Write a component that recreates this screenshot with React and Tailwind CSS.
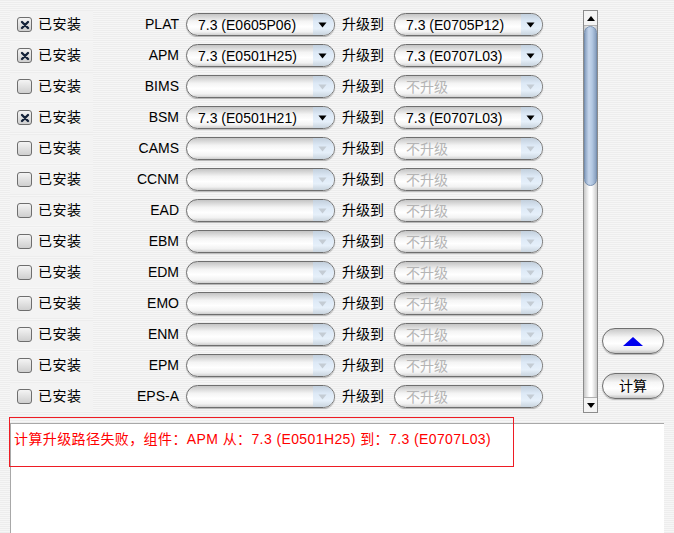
import React from "react";

const rows = [
  { name: "PLAT", on: true, from: "7.3 (E0605P06)", to: "7.3 (E0705P12)" },
  { name: "APM", on: true, from: "7.3 (E0501H25)", to: "7.3 (E0707L03)" },
  { name: "BIMS", on: false },
  { name: "BSM", on: true, from: "7.3 (E0501H21)", to: "7.3 (E0707L03)" },
  { name: "CAMS", on: false },
  { name: "CCNM", on: false },
  { name: "EAD", on: false },
  { name: "EBM", on: false },
  { name: "EDM", on: false },
  { name: "EMO", on: false },
  { name: "ENM", on: false },
  { name: "EPM", on: false },
  { name: "EPS-A", on: false },
];

const Check = ({ on }) => (
  <div className="w-[15px] h-[15px] rounded-[3px] border border-[#6e6e6e] bg-[linear-gradient(to_bottom,#f4f4f4,#cfcfcf)] flex items-center justify-center">
    {on && (
      <svg width="10" height="10" viewBox="0 0 10 10">
        <path d="M2 2 L8 8 M8 2 L2 8" stroke="#15233a" strokeWidth="2.4" strokeLinecap="round" />
      </svg>
    )}
  </div>
);

const Arrow = ({ color }) => (
  <svg width="9" height="6" viewBox="0 0 9 6">
    <path d="M0.5 0.5 H8.5 L4.5 5.5 Z" fill={color} />
  </svg>
);

const Combo = ({ value, disabled, placeholder }) => (
  <div className="w-[149px] h-[23px] rounded-full border border-[#6e6e6e] bg-[linear-gradient(to_bottom,#c4c4c4_0%,#f4f4f4_35%,#ffffff_60%,#f2f2f2_85%,#cfcfcf_100%)] flex items-center overflow-hidden shadow-[0_1px_1px_rgba(0,0,0,0.25)]">
    <div className={`flex-1 pl-[11px] text-[14px] leading-none ${disabled ? "text-[#b4b4b4]" : "text-black"}`}>
      {value || placeholder || ""}
    </div>
    <div className="w-[21px] h-full bg-[linear-gradient(to_bottom,#c2cfdc_0%,#dde9f6_35%,#e6f0fa_70%,#c9d4de_100%)] flex items-center justify-center pr-[3px]">
      <Arrow color={value ? "#000" : "#c4ccd4"} />
    </div>
  </div>
);

const PillButton = ({ children }) => (
  <div className="w-[62px] h-[26px] rounded-full border border-[#6e6e6e] bg-[linear-gradient(to_bottom,#c8c8c8_0%,#f6f6f6_35%,#ffffff_60%,#eeeeee_85%,#c4c4c4_100%)] flex items-center justify-center text-[14px] text-black shadow-[0_1px_1px_rgba(0,0,0,0.25)]">
    {children}
  </div>
);

export default function App() {
  return (
    <div
      className="w-[674px] h-[533px] overflow-hidden flex flex-col bg-[repeating-linear-gradient(to_bottom,#ededed_0px,#ededed_1px,#f6f6f6_1px,#f6f6f6_2px)]"
      style={{ fontFamily: '"Liberation Sans", "Noto Sans CJK SC", sans-serif' }}
    >
      <div className="flex h-[417px]">
        {/* component rows */}
        <div className="w-[583px] pt-[9px] flex flex-col">
          {rows.map((r) => (
            <div key={r.name} className="h-[31px] flex items-center">
              <div className="ml-[10px] w-[83px] h-[28px] bg-[#f3f3f3] flex items-center pl-[7px] gap-[6px]">
                <Check on={r.on} />
                <span className="text-[14px] text-black tracking-[0.5px]">已安装</span>
              </div>
              <div className="w-[86px] text-right text-[14px] text-black">{r.name}</div>
              <div className="ml-[7px]">
                <Combo value={r.from} />
              </div>
              <span className="ml-[7px] w-[43px] text-[14px] text-black">升级到</span>
              <div className="ml-[9px]">
                <Combo value={r.to} disabled={!r.to} placeholder="不升级" />
              </div>
            </div>
          ))}
        </div>

        {/* scrollbar */}
        <div className="mt-[10px] w-[15px] h-[403px] border border-[#8c8c8c] flex flex-col bg-[linear-gradient(to_right,#c8c8c8,#ffffff_40%,#ffffff_60%,#c8c8c8)]">
          <div className="h-[15px] flex items-center justify-center bg-[#f4f4f4] border-b border-[#b0b0b0]">
            <svg width="8" height="5" viewBox="0 0 8 5">
              <path d="M0 5 H8 L4 0 Z" fill="#000" />
            </svg>
          </div>
          <div className="h-[160px] rounded-full bg-[linear-gradient(to_right,#8aa2c2,#c6d6ec_35%,#b3c8e2_65%,#89a0bf)] border border-[#7890b0]" />
          <div className="flex-1" />
          <div className="h-[15px] flex items-center justify-center bg-[#f4f4f4] border-t border-[#b0b0b0]">
            <svg width="8" height="5" viewBox="0 0 8 5">
              <path d="M0 0 H8 L4 5 Z" fill="#000" />
            </svg>
          </div>
        </div>

        {/* side buttons */}
        <div className="ml-[4px] pt-[328px] flex flex-col gap-[19px]">
          <PillButton>
            <svg width="20" height="9" viewBox="0 0 20 9">
              <path d="M0 9 H20 L10 0 Z" fill="#0000ee" />
            </svg>
          </PillButton>
          <PillButton>计算</PillButton>
        </div>
      </div>

      {/* message area */}
      <div className="relative flex-1">
        <div className="mt-[6px] ml-[10px] w-[654px] h-full bg-white border-t border-l border-[#a8a8a8]" />
        <div className="absolute left-[9px] top-0 w-[505px] h-[50px] border border-[#ee1c24] pl-[4px] pt-[12px] text-[14px] text-[#ff0000] leading-[18px] tracking-[0.4px]">
          计算升级路径失败，组件：APM 从：7.3 (E0501H25) 到：7.3 (E0707L03)
        </div>
      </div>
    </div>
  );
}
